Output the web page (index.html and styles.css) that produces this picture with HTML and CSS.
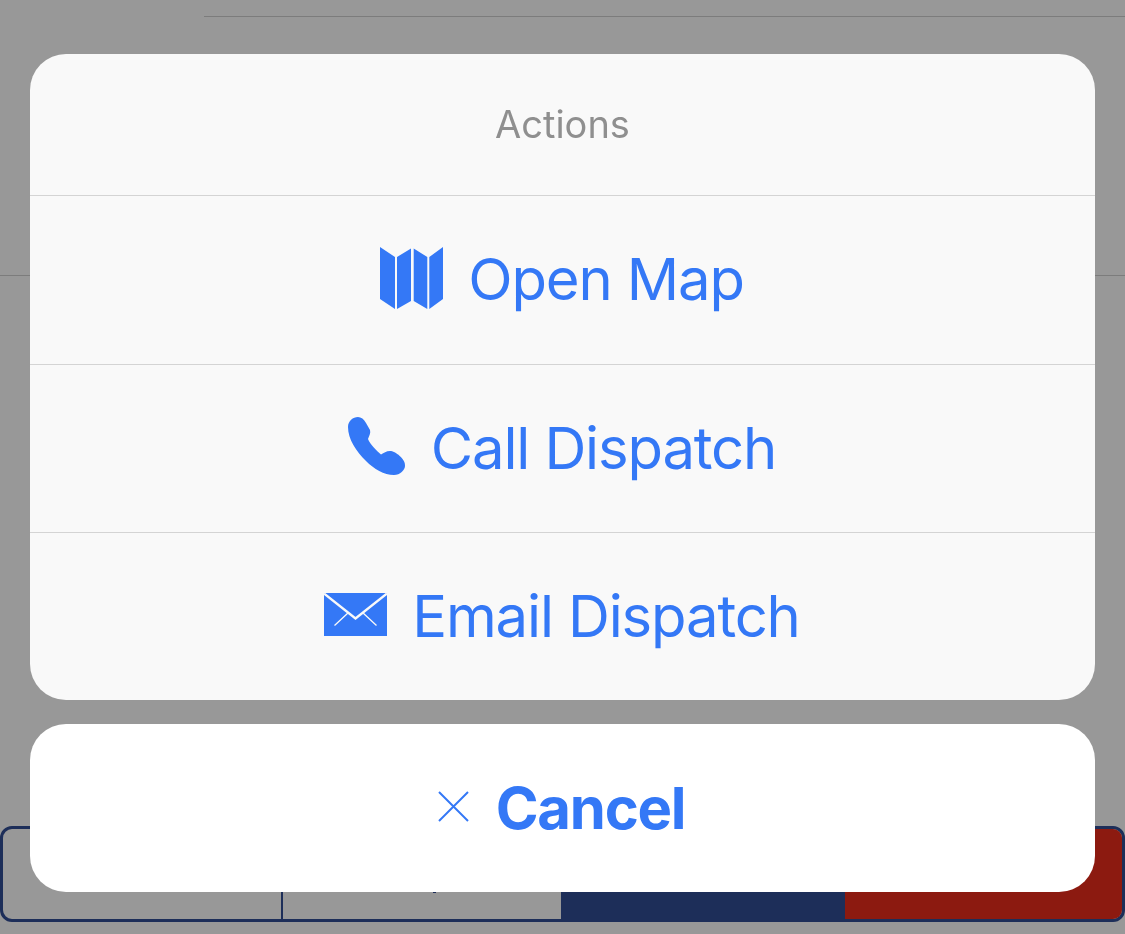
FILE: index.html
```html
<!DOCTYPE html>
<html lang="en">
<head>
<meta charset="utf-8">
<title>Actions</title>
<link rel="stylesheet" href="styles.css">
</head>
<body>
<div class="page">
  <div class="rule rule-top"></div>
  <div class="rule rule-mid"></div>
  <div class="tabs">
    <div class="tab tab-line"></div>
    <div class="tab tab-plain"><i class="tab-speck"></i></div>
    <div class="tab tab-navy"></div>
    <div class="tab tab-red"></div>
  </div>
</div>
<div class="overlay">
  <div class="sheet">
    <div class="sheet-title">Actions</div>
    <div class="sheet-row sheet-row-first">
      <svg class="icon" width="63" height="63" viewBox="0 0 63 63"><path d="M0 0 15 10V62L0 52ZM17 10 31 1.500V54L17 62ZM33.700 1.500 47.300 10V62L33.700 54ZM49.300 10 63 0V52L49.300 62Z"/></svg>
      <span>Open Map</span>
    </div>
    <div class="sheet-row">
      <svg class="icon" width="58" height="59" viewBox="0 0 58 59"><path d="M0 10C0 4 5 0 10 0 13 0 16 2 18 6L22 13C23 16 21 19 20 22 22 27 28 33 33 37.500 36 36 38 34 42 34 47 34 58 42 57 49 57 53 52 58 46 58 36 58 26 52 18 44 8 34 0 22 0 10Z"/></svg>
      <span>Call Dispatch</span>
    </div>
    <div class="sheet-row">
      <svg class="icon" width="63" height="43" viewBox="0 0 63 43"><rect width="63" height="43"/><path class="flap" d="M0 .5 31.500 25.500 63 .5"/><path class="fold" d="M10.500 32.500 24.500 19.500M52.500 32.500 38.500 19.500"/></svg>
      <span>Email Dispatch</span>
    </div>
  </div>
  <button class="cancel" type="button">
    <svg class="icon-x" width="31" height="31" viewBox="0 0 31 31"><path d="M1 1 30 30M30 1 1 30"/></svg>
    <span>Cancel</span>
  </button>
</div>
</body>
</html>
```
FILE: styles.css
```css
html, body {
  margin: 0;
  height: 100%;
  overflow: hidden;
}
body {
  background: #989898;
  font-family: Inter, "Noto Sans", sans-serif;
}
.page {
  display: flex;
  flex-direction: column;
  height: 934px;
}
.rule {
  height: 1px;
  background: #7c7c7c;
}
.rule-top {
  margin: 16px 0 0 204px;
}
.rule-mid {
  margin-top: 258px;
}
.tabs {
  display: grid;
  grid-template-columns: 280px 278px 284px 1fr;
  height: 96px;
  margin-top: 550px;
  border: 3px solid #1d2e59;
  border-radius: 12px;
  box-sizing: border-box;
  overflow: hidden;
}
.tab-line {
  border-right: 2px solid #1d2e59;
}
.tab-plain {
  position: relative;
}
.tab-speck {
  position: absolute;
  left: 150px;
  top: 63px;
  width: 3px;
  height: 1px;
  background: #1d2e59;
}
.tab-navy {
  background: #1d2e59;
}
.tab-red {
  background: #8c1a10;
}
.overlay {
  position: absolute;
  top: 54px;
  left: 30px;
  width: 1065px;
  display: flex;
  flex-direction: column;
  gap: 24px;
  will-change: transform;
}
.sheet {
  background: #f9f9f9;
  border-radius: 36px;
  overflow: hidden;
}
.sheet-title {
  height: 141px;
  box-sizing: border-box;
  padding-bottom: 2px;
  display: flex;
  align-items: center;
  justify-content: center;
  color: #8f8f8f;
  font-size: 38px;
}
.sheet-row {
  height: 168px;
  box-sizing: border-box;
  padding: 0 1px 2px 0;
  border-top: 1px solid #d4d4d4;
  display: flex;
  align-items: center;
  justify-content: center;
  gap: 25px;
  color: #3478f6;
  font-size: 58px;
  letter-spacing: -1.15px;
}
.sheet-row-first {
  height: 169px;
}
.icon {
  fill: #3478f6;
  margin-bottom: 2px;
}
.flap, .fold {
  fill: none;
  stroke: #f9f9f9;
}
.flap {
  stroke-width: 2.4;
}
.fold {
  stroke-width: 1.3;
}
.cancel {
  height: 168px;
  border: 0;
  padding: 0 2px 0 0;
  background: #fff;
  border-radius: 36px;
  display: flex;
  align-items: center;
  justify-content: center;
  gap: 27px;
  color: #3478f6;
  font: 700 58px Inter, "Noto Sans", sans-serif;
  letter-spacing: -1.25px;
}
.icon-x {
  fill: none;
  stroke: #3478f6;
  stroke-width: 2;
  margin-bottom: 3px;
}
```
